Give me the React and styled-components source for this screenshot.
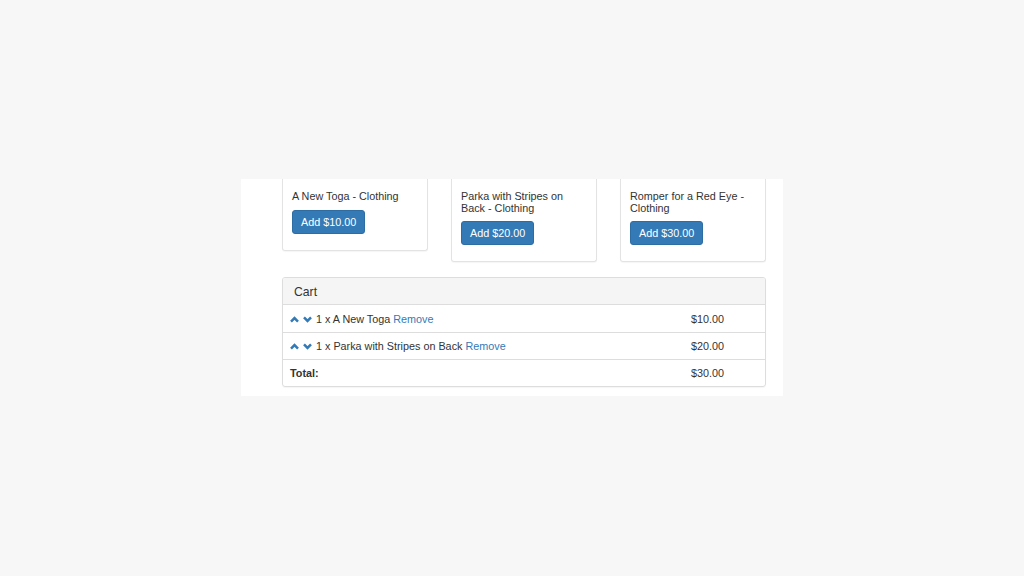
import React from "react";
import styled, { createGlobalStyle } from "styled-components";

const Global = createGlobalStyle`
  html, body { margin: 0; padding: 0; background: #f7f7f7; }
  body { font-family: "Liberation Sans", Arial, sans-serif; color: #333; }
`;

const Page = styled.div`
  width: 1024px;
  height: 576px;
  padding: 179px 0 0 241px;
  box-sizing: border-box;
`;

const Panel = styled.div`
  width: 542px;
  height: 217px;
  box-sizing: border-box;
  background: #fff;
  padding: 0 17px 9px 41px;
  display: flex;
  flex-direction: column;
`;

const Products = styled.div`
  display: flex;
  align-items: flex-start;
  gap: 23px;
`;

const Card = styled.div`
  width: 146px;
  box-sizing: border-box;
  border: 1px solid #e3e3e3;
  border-top: none;
  border-radius: 0 0 3px 3px;
  box-shadow: 0 1px 1px rgba(0, 0, 0, 0.04);
  padding: 12px 9px 16px;
`;

const Title = styled.div`
  font-size: 10.8px;
  line-height: 11.5px;
  color: #333;
  margin-bottom: 7px;
`;

const AddButton = styled.button`
  font-family: inherit;
  font-size: 10.8px;
  color: #fff;
  background: #337ab7;
  border: 1px solid #2e6da4;
  border-radius: 3px;
  height: 24px;
  padding: 0 8px;
  display: block;
  cursor: pointer;
`;

const Cart = styled.div`
  margin-top: 15px;
  border: 1px solid #ddd;
  border-radius: 3px;
  box-shadow: 0 1px 1px rgba(0, 0, 0, 0.04);
  overflow: hidden;
`;

const CartHeader = styled.div`
  height: 27px;
  box-sizing: border-box;
  background: #f5f5f5;
  border-bottom: 1px solid #ddd;
  padding: 1px 11px 0;
  display: flex;
  align-items: center;
  font-size: 12.2px;
  color: #333;
`;

const Row = styled.div`
  display: grid;
  grid-template-columns: 1fr 81px;
  height: 27px;
  box-sizing: border-box;
  border-top: ${(p) => (p.$first ? "none" : "1px solid #ddd")};
  padding-top: ${(p) => (p.$first ? "1px" : "0")};
  font-size: 10.8px;
  align-items: center;
`;

const Cell = styled.div`
  padding: 0 7px;
  display: flex;
  align-items: center;
  white-space: nowrap;
  font-weight: ${(p) => (p.$bold ? 700 : 400)};
`;

const Arrows = styled.span`
  display: inline-flex;
  gap: 4px;
  margin-right: 4px;
`;

const Remove = styled.a`
  color: #337ab7;
  text-decoration: none;
  margin-left: 3px;
  cursor: pointer;
`;

const Chevron = ({ up }) => (
  <svg width="9" height="7" viewBox="0 0 9 7">
    <path
      d={up ? "M1 5.7 L4.5 2.1 L8 5.7" : "M1 1.3 L4.5 4.9 L8 1.3"}
      fill="none"
      stroke="#337ab7"
      strokeWidth="2.5"
      strokeLinecap="butt"
      strokeLinejoin="miter"
    />
  </svg>
);

const products = [
  { name: "A New Toga - Clothing", price: "$10.00" },
  { name: "Parka with Stripes on Back - Clothing", price: "$20.00" },
  { name: "Romper for a Red Eye - Clothing", price: "$30.00" },
];

const items = [
  { name: "A New Toga", price: "$10.00" },
  { name: "Parka with Stripes on Back", price: "$20.00" },
];

export default function App() {
  return (
    <>
      <Global />
      <Page>
        <Panel>
          <Products>
            {products.map((p) => (
              <Card key={p.name}>
                <Title>{p.name}</Title>
                <AddButton>Add {p.price}</AddButton>
              </Card>
            ))}
          </Products>
          <Cart>
            <CartHeader>Cart</CartHeader>
            {items.map((it, i) => (
              <Row key={it.name} $first={i === 0}>
                <Cell>
                  <Arrows>
                    <Chevron up />
                    <Chevron />
                  </Arrows>
                  1 x {it.name}
                  <Remove>Remove</Remove>
                </Cell>
                <Cell>{it.price}</Cell>
              </Row>
            ))}
            <Row>
              <Cell $bold>Total:</Cell>
              <Cell>$30.00</Cell>
            </Row>
          </Cart>
        </Panel>
      </Page>
    </>
  );
}
